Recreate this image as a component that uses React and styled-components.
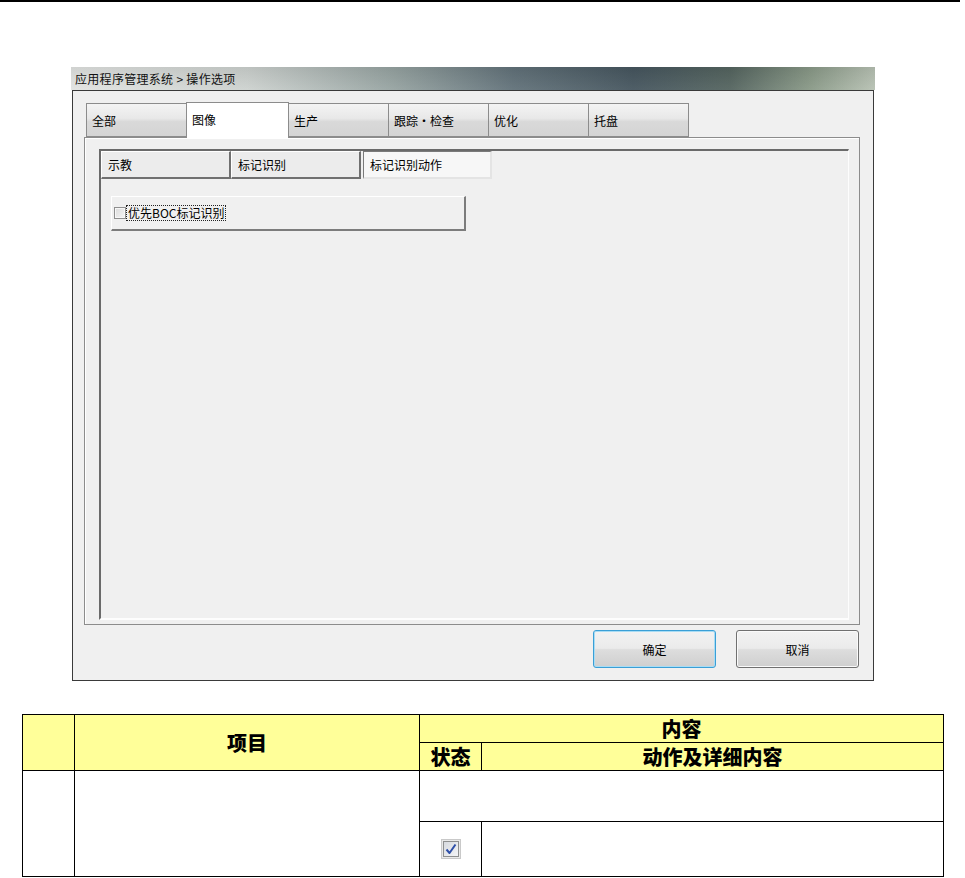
import React from "react";
import styled, { createGlobalStyle } from "styled-components";

const Global = createGlobalStyle`
  html, body { margin: 0; padding: 0; background: #fff; }
  body { font-family: "Noto Sans CJK SC", "Liberation Sans", sans-serif; }
  * { box-sizing: border-box; }
`;

const Page = styled.div`
  width: 965px;
  height: 878px;
  overflow: hidden;
  display: flex;
  flex-direction: column;
`;

const TopRule = styled.div`
  width: 960px;
  height: 2px;
  background: #000;
`;

const Window = styled.div`
  margin: 65px 0 0 71px;
  width: 804px;
  display: flex;
  flex-direction: column;
`;

const TitleBar = styled.div`
  height: 23px;
  display: flex;
  align-items: center;
  padding-left: 4px;
  font-size: 12px;
  letter-spacing: 0.3px;
  color: #111;
  background: linear-gradient(
      to bottom,
      rgba(0, 0, 0, 0.08) 0%,
      rgba(255, 255, 255, 0.05) 100%
    ),
    linear-gradient(
      to right,
      #e2e4e2 0%,
      #cdd2cf 22%,
      #97a4a2 40%,
      #62727a 55%,
      #46565f 70%,
      #556560 82%,
      #8a9a88 92%,
      #b8c2b4 100%
    );
`;

const WinBody = styled.div`
  margin-left: 1px;
  width: 802px;
  height: 591px;
  border: 1px solid #3a3a3a;
  background: #f0f0f0;
  display: flex;
  flex-direction: column;
  padding: 10px 0 0 0;
`;

const TabBar = styled.div`
  display: flex;
  align-items: flex-end;
  padding-left: 13px;
  height: 36px;
  position: relative;
  z-index: 1;
`;

const Tab = styled.div`
  width: ${(p) => p.$w}px;
  height: ${(p) => (p.$active ? 36 : 34)}px;
  margin-bottom: ${(p) => (p.$active ? -1 : 0)}px;
  border: 1px solid #8c8c8c;
  border-bottom: ${(p) => (p.$active ? "none" : "1px solid #8c8c8c")};
  background: ${(p) =>
    p.$active
      ? "#ffffff"
      : "linear-gradient(to bottom, #f4f4f4 0%, #e8e8e8 45%, #d9d9d9 55%, #d4d4d4 100%)"};
  font-size: 12px;
  color: #000;
  display: flex;
  align-items: ${(p) => (p.$active ? "flex-start" : "center")};
  padding: ${(p) => (p.$active ? "8px 0 0 5px" : "0 0 0 5px")};
  & + & {
    margin-left: -1px;
  }
`;

const TabPanel = styled.div`
  margin-left: 11px;
  width: 776px;
  height: 488px;
  border: 1px solid #8c8c8c;
  box-shadow: inset 1px 1px 0 #fff;
  background: #f0f0f0;
  padding: 11px 10px 4px 14px;
`;

const InnerPanel = styled.div`
  width: 750px;
  height: 100%;
  border-top: 2px solid #6a6a6a;
  border-left: 2px solid #6a6a6a;
  border-right: 1px solid #fdfdfd;
  border-bottom: 2px solid #fdfdfd;
  display: flex;
  flex-direction: column;
`;

const SubTabBar = styled.div`
  display: flex;
  height: 28px;
`;

const SubTab = styled.div`
  width: ${(p) => p.$w}px;
  margin-left: ${(p) => p.$gap || 0}px;
  height: 28px;
  font-size: 12px;
  color: #000;
  display: flex;
  align-items: center;
  padding-left: 6px;
  background: ${(p) => (p.$active ? "#f7f7f7" : "#ececec")};
  border-top: 1px solid ${(p) => (p.$active ? "#7a7a7a" : "#fff")};
  border-left: 1px solid ${(p) => (p.$active ? "#7a7a7a" : "#fff")};
  border-right: 2px solid ${(p) => (p.$active ? "#e4e4e4" : "#707070")};
  border-bottom: 2px solid ${(p) => (p.$active ? "#e4e4e4" : "#707070")};
`;

const GroupBox = styled.div`
  margin: 17px 0 0 10px;
  width: 355px;
  height: 35px;
  border-top: 1px solid #fff;
  border-left: 1px solid #fff;
  border-right: 2px solid #7c7c7c;
  border-bottom: 2px solid #7c7c7c;
  display: flex;
  align-items: center;
  padding-left: 2px;
`;

const Check = styled.span`
  width: 12px;
  height: 12px;
  border: 1px solid #8f8f8f;
  background: linear-gradient(135deg, #dcdcdc 0%, #f4f4f4 100%);
  box-shadow: inset 0 0 0 1px #f7f7f7;
  flex: none;
`;

const CheckLabel = styled.span`
  font-size: 12px;
  line-height: 14px;
  color: #000;
  outline: 1px dotted #222;
  margin-left: 1px;
  padding: 0 1px;
`;

const ButtonRow = styled.div`
  display: flex;
  justify-content: flex-end;
  gap: 20px;
  margin-top: 5px;
  padding-right: 14px;
`;

const Button = styled.div`
  width: 123px;
  height: 38px;
  border-radius: 3px;
  border: 1px solid ${(p) => (p.$focus ? "#3a9fd6" : "#707070")};
  box-shadow: ${(p) =>
    p.$focus ? "inset 0 0 0 1px #a8dcf4" : "inset 0 0 0 1px #fafafa"};
  background: linear-gradient(
    to bottom,
    #f2f2f2 0%,
    #ebebeb 48%,
    #dddddd 52%,
    #cfcfcf 100%
  );
  display: flex;
  align-items: center;
  justify-content: center;
  font-size: 12px;
  color: #000;
`;

const Table = styled.table`
  margin: 33px 0 0 22px;
  width: 921px;
  border-collapse: collapse;
  table-layout: fixed;
  font-family: "Noto Sans CJK SC", "Liberation Sans", sans-serif;
  td, th {
    border: 1.5px solid #000;
    padding: 0;
  }
`;

const Th = styled.th`
  background: #ffff99;
  font-weight: 900;
  font-size: 20px;
  line-height: 22px;
  text-align: center;
  color: #000;
  height: ${(p) => p.$h || 28}px;
`;

const Td = styled.td`
  background: #fff;
  height: ${(p) => p.$h}px;
  text-align: center;
  vertical-align: middle;
`;

const TickBox = () => (
  <svg width="20" height="20" viewBox="0 0 20 20" style={{ display: "block", margin: "0 auto" }}>
    <defs>
      <linearGradient id="tbg" x1="0" y1="0" x2="1" y2="1">
        <stop offset="0" stopColor="#d6d9de" />
        <stop offset="1" stopColor="#f4f5f7" />
      </linearGradient>
    </defs>
    <rect x="0.5" y="0.5" width="19" height="19" fill="#e9e9e9" stroke="#c9c9c9" />
    <rect x="2.5" y="2.5" width="15" height="15" fill="url(#tbg)" stroke="#8e8f8f" />
    <path d="M5.5 10.5 L8.5 14 L14.5 5.5" fill="none" stroke="#2e4fa8" strokeWidth="2" strokeLinejoin="round" />
  </svg>
);

const tabs = [
  { t: "全部", w: 101 },
  { t: "图像", w: 103, active: true },
  { t: "生产", w: 101 },
  { t: "跟踪・检查", w: 101 },
  { t: "优化", w: 101 },
  { t: "托盘", w: 101 },
];

export default function App() {
  return (
    <Page>
      <Global />
      <TopRule />
      <Window>
        <TitleBar>应用程序管理系统 &gt; 操作选项</TitleBar>
        <WinBody>
          <TabBar>
            {tabs.map((x) => (
              <Tab key={x.t} $w={x.w} $active={x.active}>
                {x.t}
              </Tab>
            ))}
          </TabBar>
          <TabPanel>
            <InnerPanel>
              <SubTabBar>
                <SubTab $w={130}>示教</SubTab>
                <SubTab $w={130}>标记识别</SubTab>
                <SubTab $w={129} $gap={2} $active>
                  标记识别动作
                </SubTab>
              </SubTabBar>
              <GroupBox>
                <Check />
                <CheckLabel>优先BOC标记识别</CheckLabel>
              </GroupBox>
            </InnerPanel>
          </TabPanel>
          <ButtonRow>
            <Button $focus>确定</Button>
            <Button>取消</Button>
          </ButtonRow>
        </WinBody>
      </Window>
      <Table>
        <colgroup>
          <col style={{ width: 52 }} />
          <col style={{ width: 345 }} />
          <col style={{ width: 62 }} />
          <col style={{ width: 462 }} />
        </colgroup>
        <thead>
          <tr>
            <Th rowSpan={2} />
            <Th rowSpan={2}>项目</Th>
            <Th colSpan={2}>内容</Th>
          </tr>
          <tr>
            <Th>状态</Th>
            <Th>动作及详细内容</Th>
          </tr>
        </thead>
        <tbody>
          <tr>
            <Td rowSpan={2} />
            <Td rowSpan={2} />
            <Td colSpan={2} $h={51} />
          </tr>
          <tr>
            <Td $h={55}>
              <TickBox />
            </Td>
            <Td />
          </tr>
        </tbody>
      </Table>
    </Page>
  );
}
